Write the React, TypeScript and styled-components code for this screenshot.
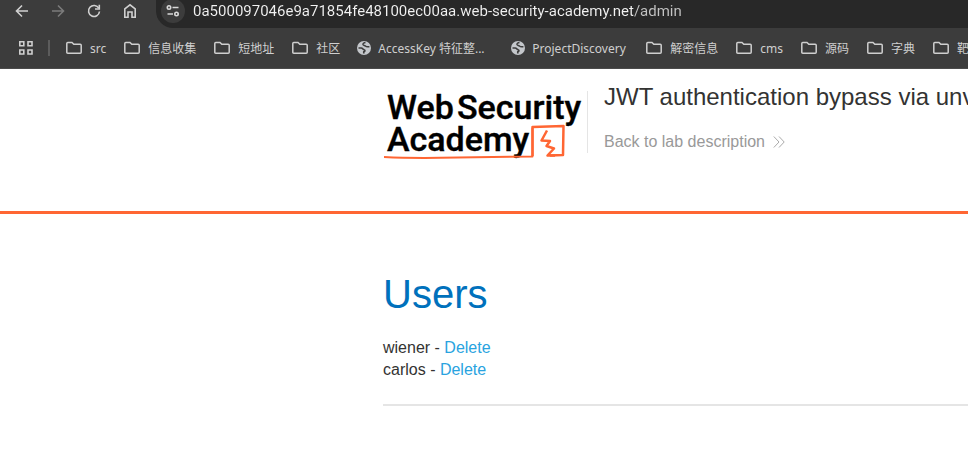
import React from "react";
import styled, { createGlobalStyle } from "styled-components";

const GlobalStyle = createGlobalStyle`
  *, *::before, *::after { box-sizing: border-box; }
  body {
    margin: 0;
    background: #fff;
    color: #333332;
    font-family: "Liberation Sans", Arial, sans-serif;
    font-size: 16px;
    line-height: 22px;
    overflow: hidden;
  }
`;

const uiFont = `"Noto Sans", "Noto Sans CJK SC", sans-serif`;

const Browser = styled.header`
  background: #3c3c3c;
  border-bottom: 1px solid #4b4b4b;
  font-family: ${uiFont};
  overflow: hidden;
`;

const Toolbar = styled.div`
  display: flex;
  height: 28px;
  padding-left: 4px;
`;

const NavButton = styled.button<{ $dim?: boolean }>`
  display: flex;
  align-items: center;
  justify-content: center;
  width: 36px;
  height: 22px;
  flex: none;
  padding: 0;
  border: 0;
  background: none;
  color: ${(p) => (p.$dim ? "#7b7b7b" : "#d0d0d0")};
`;

const AddressBar = styled.div`
  display: flex;
  flex: 1;
  min-width: 0;
  margin-left: 8px;
  padding-left: 5px;
  background: #282828;
  border-bottom-left-radius: 17px;
  overflow: hidden;
`;

const SiteInfo = styled.button`
  display: flex;
  align-items: center;
  justify-content: center;
  flex: none;
  align-self: flex-end;
  width: 24px;
  height: 24px;
  margin-bottom: 5px;
  padding: 0;
  border: 0;
  border-radius: 50%;
  background: #3c3c3c;
  color: #d8d8d8;
`;

const Address = styled.input`
  flex: 1;
  min-width: 0;
  height: 22px;
  margin-left: 8px;
  padding: 0;
  border: 0;
  outline: 0;
  font: 15px/22px Roboto, ${uiFont};
  color: transparent;
  background: linear-gradient(90deg, #f2f2f2 441px, #c4c4c4 441px);
  background-clip: text;
  -webkit-background-clip: text;
`;

const Bookmarks = styled.nav`
  display: flex;
  align-items: center;
  height: 40px;
  padding-left: 18px;
  color: #cfcfcf;
  white-space: nowrap;
`;

const AppsButton = styled.button`
  display: flex;
  flex: none;
  padding: 0;
  border: 0;
  background: none;
  color: inherit;
`;

const Separator = styled.span`
  flex: none;
  width: 2px;
  height: 16px;
  margin: 0 16px 0 14px;
  background: #5c5c5c;
`;

const BookmarkList = styled.ul`
  display: flex;
  gap: 18px;
  margin: 0;
  padding: 0;
  list-style: none;
`;

const Bookmark = styled.a<{ $site?: boolean }>`
  display: flex;
  align-items: center;
  gap: ${(p) => (p.$site ? 6 : 8)}px;
  margin-left: ${(p) => (p.$site ? -2 : 0)}px;
  color: inherit;
  font-size: 12px;
  line-height: 18px;
  text-decoration: none;

  svg { flex: none; }
`;

const BookmarkLabel = styled.span<{ $width?: number }>`
  min-width: ${(p) => p.$width ?? 0}px;
  padding-top: 1px;
`;

const LabHeader = styled.section`
  display: flex;
  height: 145px;
  padding: 15px 0 0 383px;
  border-bottom: 3px solid #ff6633;
  overflow: hidden;
`;

const LogoLink = styled.a`
  display: block;
  flex: none;
  margin-top: 5px;
  color: #000;
`;

const TitleBlock = styled.div`
  height: 62px;
  margin: 7px 0 0 4px;
  padding-left: 16px;
  border-left: 1px solid #e5e5e5;
  white-space: nowrap;
`;

const LabTitle = styled.h2`
  margin: -8px 0 0;
  font-size: 24px;
  line-height: 28px;
  font-weight: 400;
`;

const BackLink = styled.a`
  display: inline-flex;
  align-items: center;
  gap: 8px;
  margin-top: 20px;
  color: #999;
  text-decoration: none;
`;

const Content = styled.main`
  padding: 56px 0 0 383px;
`;

const Heading = styled.h1`
  margin: 0 0 19px;
  color: #0071bc;
  font-size: 40px;
  line-height: 48px;
  font-weight: 400;
`;

const UserRow = styled.div`
  a { color: #29a3e0; text-decoration: none; }
`;

const Rule = styled.hr`
  height: 2px;
  margin: 23px 0 0;
  border: 0;
  background: #e5e5e5;
`;

const stroke = {
  fill: "none",
  stroke: "currentColor",
  strokeWidth: 1.6,
} as const;

const Arrow = ({ flip }: { flip?: boolean }) => (
  <svg width="14" height="14" viewBox="0 0 14 14" {...stroke}>
    <path d={flip ? "M1 7h11M7 1.500l5.500 5.500L7 12.500" : "M13 7H2M7 1.500L1.500 7L7 12.500"} />
  </svg>
);

const Reload = () => (
  <svg width="14" height="14" viewBox="0 0 14 14" {...stroke}>
    <path d="M11.800 4.200A5.500 5.500 0 1 0 12.500 7.500" />
    <path d="M12.300 0.800V5H8" />
  </svg>
);

const Home = () => (
  <svg width="14" height="16" viewBox="0 0 14 16" {...stroke}>
    <path d="M1.800 14.200V6L7 1.800L12.200 6V14.200H9V9H5V14.200Z" />
  </svg>
);

const Tune = () => (
  <svg width="14" height="12" viewBox="0 0 14 12" {...stroke}>
    <circle cx="3" cy="2.500" r="1.700" />
    <path d="M6.500 2.500H12.500M1.500 9H7" />
    <circle cx="10.500" cy="9" r="1.700" />
  </svg>
);

const Apps = () => (
  <svg width="16" height="16" viewBox="0 0 16 16" {...stroke}>
    <path d="M1.800 1.800h4v4h-4zM10 1.800h4v4h-4zM1.800 10h4v4h-4zM10 10h4v4h-4z" />
  </svg>
);

const Folder = () => (
  <svg width="16" height="14" viewBox="0 0 16 14" {...stroke} strokeWidth="1.500">
    <path d="M1.800 1.500H6L7.800 3.300H14.200Q15.200 3.300 15.200 4.300V11.200Q15.200 12.200 14.200 12.200H1.800Q0.800 12.200 0.800 11.200V2.500Q0.800 1.500 1.800 1.500Z" />
  </svg>
);

const Globe = () => (
  <svg width="16" height="16" viewBox="0 0 16 16">
    <circle cx="8" cy="8" r="7" fill="#c4c7cb" />
    <path
      d="M9.500 2.500C7.800 2.800 6.700 3.600 7 4.600C7.300 5.600 9 5.200 9.700 6.200C10.200 7.100 11.500 6.800 13.400 6.800"
      fill="none"
      stroke="#3c3c3c"
      strokeWidth="1.500"
    />
    <path
      d="M2.500 8H5.200C6.800 8 6.500 9.400 8 9.700C9.500 10.100 9 11.500 7.800 11.800V13.500"
      fill="none"
      stroke="#3c3c3c"
      strokeWidth="1.700"
    />
  </svg>
);

const Chevrons = () => (
  <svg width="12" height="12" viewBox="0 0 12 12" fill="none" stroke="#aaa">
    <path d="M0.800 0.500L6 6L0.800 11.500M6 0.500L11.200 6L6 11.500" />
  </svg>
);

const Logo = () => (
  <svg width="200" height="72" viewBox="0 0 200 72" role="img" aria-label="Web Security Academy">
    <g
      fill="#000"
      stroke="#000"
      strokeWidth="0.400"
      fontFamily="Roboto, sans-serif"
      fontWeight="500"
      fontSize="34"
    >
      <text x="4" y="30">Web</text>
      <text x="74" y="30">Security</text>
      <text x="4" y="62">Academy</text>
    </g>
    <g fill="none" stroke="#ff6633" strokeLinejoin="round">
      <path d="M1 68Q30 69.500 75 68.500L149.500 67.500V39" strokeWidth="2" />
      <path d="M149.500 67V38L180.500 37L180 66L167 66.500" strokeWidth="2.500" />
      <path d="M164 41.500L158.500 51.500L167 52L163.500 57L171 59.500L164.500 66.500H172" strokeWidth="2.500" />
    </g>
  </svg>
);

const bookmarks: { label: string; site?: boolean; width?: number }[] = [
  { label: "src" },
  { label: "信息收集" },
  { label: "短地址" },
  { label: "社区" },
  { label: "AccessKey 特征整...", site: true, width: 116 },
  { label: "ProjectDiscovery", site: true, width: 96 },
  { label: "解密信息" },
  { label: "cms" },
  { label: "源码" },
  { label: "字典" },
  { label: "靶" },
];

const users = ["wiener", "carlos"];

export default function App() {
  return (
    <>
      <GlobalStyle />
      <Browser>
        <Toolbar>
          <NavButton aria-label="Back"><Arrow /></NavButton>
          <NavButton aria-label="Forward" $dim><Arrow flip /></NavButton>
          <NavButton aria-label="Reload"><Reload /></NavButton>
          <NavButton aria-label="Home"><Home /></NavButton>
          <AddressBar>
            <SiteInfo aria-label="Site information"><Tune /></SiteInfo>
            <Address
              aria-label="Address"
              spellCheck={false}
              defaultValue="0a500097046e9a71854fe48100ec00aa.web-security-academy.net/admin"
            />
          </AddressBar>
        </Toolbar>
        <Bookmarks aria-label="Bookmarks">
          <AppsButton aria-label="Apps"><Apps /></AppsButton>
          <Separator />
          <BookmarkList>
            {bookmarks.map((b) => (
              <li key={b.label}>
                <Bookmark href="#" $site={b.site}>
                  {b.site ? <Globe /> : <Folder />}
                  <BookmarkLabel $width={b.width}>{b.label}</BookmarkLabel>
                </Bookmark>
              </li>
            ))}
          </BookmarkList>
        </Bookmarks>
      </Browser>
      <LabHeader>
        <LogoLink href="#"><Logo /></LogoLink>
        <TitleBlock>
          <LabTitle>JWT authentication bypass via unverified signature</LabTitle>
          <BackLink href="#">Back to lab description <Chevrons /></BackLink>
        </TitleBlock>
      </LabHeader>
      <Content>
        <Heading>Users</Heading>
        {users.map((name) => (
          <UserRow key={name}>
            {name} - <a href="#">Delete</a>
          </UserRow>
        ))}
        <Rule />
      </Content>
    </>
  );
}
